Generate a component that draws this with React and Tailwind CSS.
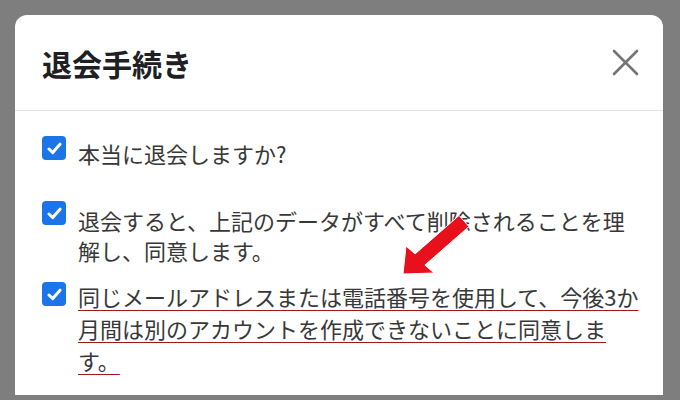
import React from "react";

function Check({ className = "" }) {
  return (
    <div className={"flex h-[24px] w-[24px] shrink-0 items-center justify-center rounded-[4px] bg-[#1b74e8] " + className}>
      <svg width="15" height="13" viewBox="0 0 15 13" fill="none">
        <path d="M2 7 L5.8 10.6 L13 2.2" stroke="#fff" strokeWidth="3" strokeLinecap="round" strokeLinejoin="round" />
      </svg>
    </div>
  );
}

export default function App() {
  const font = { fontFamily: '"Noto Sans CJK JP", "Noto Sans", sans-serif' };
  const ul = "underline decoration-[#a3141c] decoration-1 underline-offset-[4px]";
  return (
    <div className="relative flex h-[400px] w-[680px] flex-col overflow-hidden bg-[#7e7e7e] pb-[5px] pl-[15px] pr-[17px] pt-[15px]" style={font}>
      <div className="flex flex-1 flex-col overflow-hidden rounded-t-[12px] bg-white">
        <div className="flex h-[96px] shrink-0 items-center justify-between border-b border-[#e4e4e4] pl-[27px] pr-[24px]">
          <h1 className="text-[30px] font-bold leading-none text-[#1f2023]">退会手続き</h1>
          <svg width="27" height="27" viewBox="0 0 27 27" fill="none">
            <path d="M2 2 L25 25 M25 2 L2 25" stroke="#747474" strokeWidth="2.6" strokeLinecap="round" />
          </svg>
        </div>
        <div className="flex flex-col pl-[27px] pt-[27px] text-[22px] text-[#383838]">
          <div className="flex items-start gap-3 leading-[30px]">
            <Check className="-mt-[2px]" />
            <p>本当に退会しますか?</p>
          </div>
          <div className="mt-[37px] flex items-start gap-3 leading-[30px]">
            <Check className="-mt-[4px]" />
            <p className="w-[566px]">退会すると、上記のデータがすべて削除されることを理解し、同意します。</p>
          </div>
          <div className="mt-[15px] flex items-start gap-3 leading-[32px]">
            <Check className="mt-[2px]" />
            <p className={"w-[566px] " + ul}>同じメールアドレスまたは電話番号を使用して、今後3か月間は別のアカウントを作成できないことに同意します。</p>
          </div>
        </div>
      </div>
      <svg className="absolute left-0 top-0" width="680" height="400" viewBox="0 0 680 400">
        <polygon
          points="403,274 434,273 424.9,265.1 468.9,226.6 459.1,215.4 415.1,253.9 406,246"
          fill="#e8101a"
          stroke="#ffffff"
          strokeWidth="1"
          strokeLinejoin="round"
        />
      </svg>
    </div>
  );
}
